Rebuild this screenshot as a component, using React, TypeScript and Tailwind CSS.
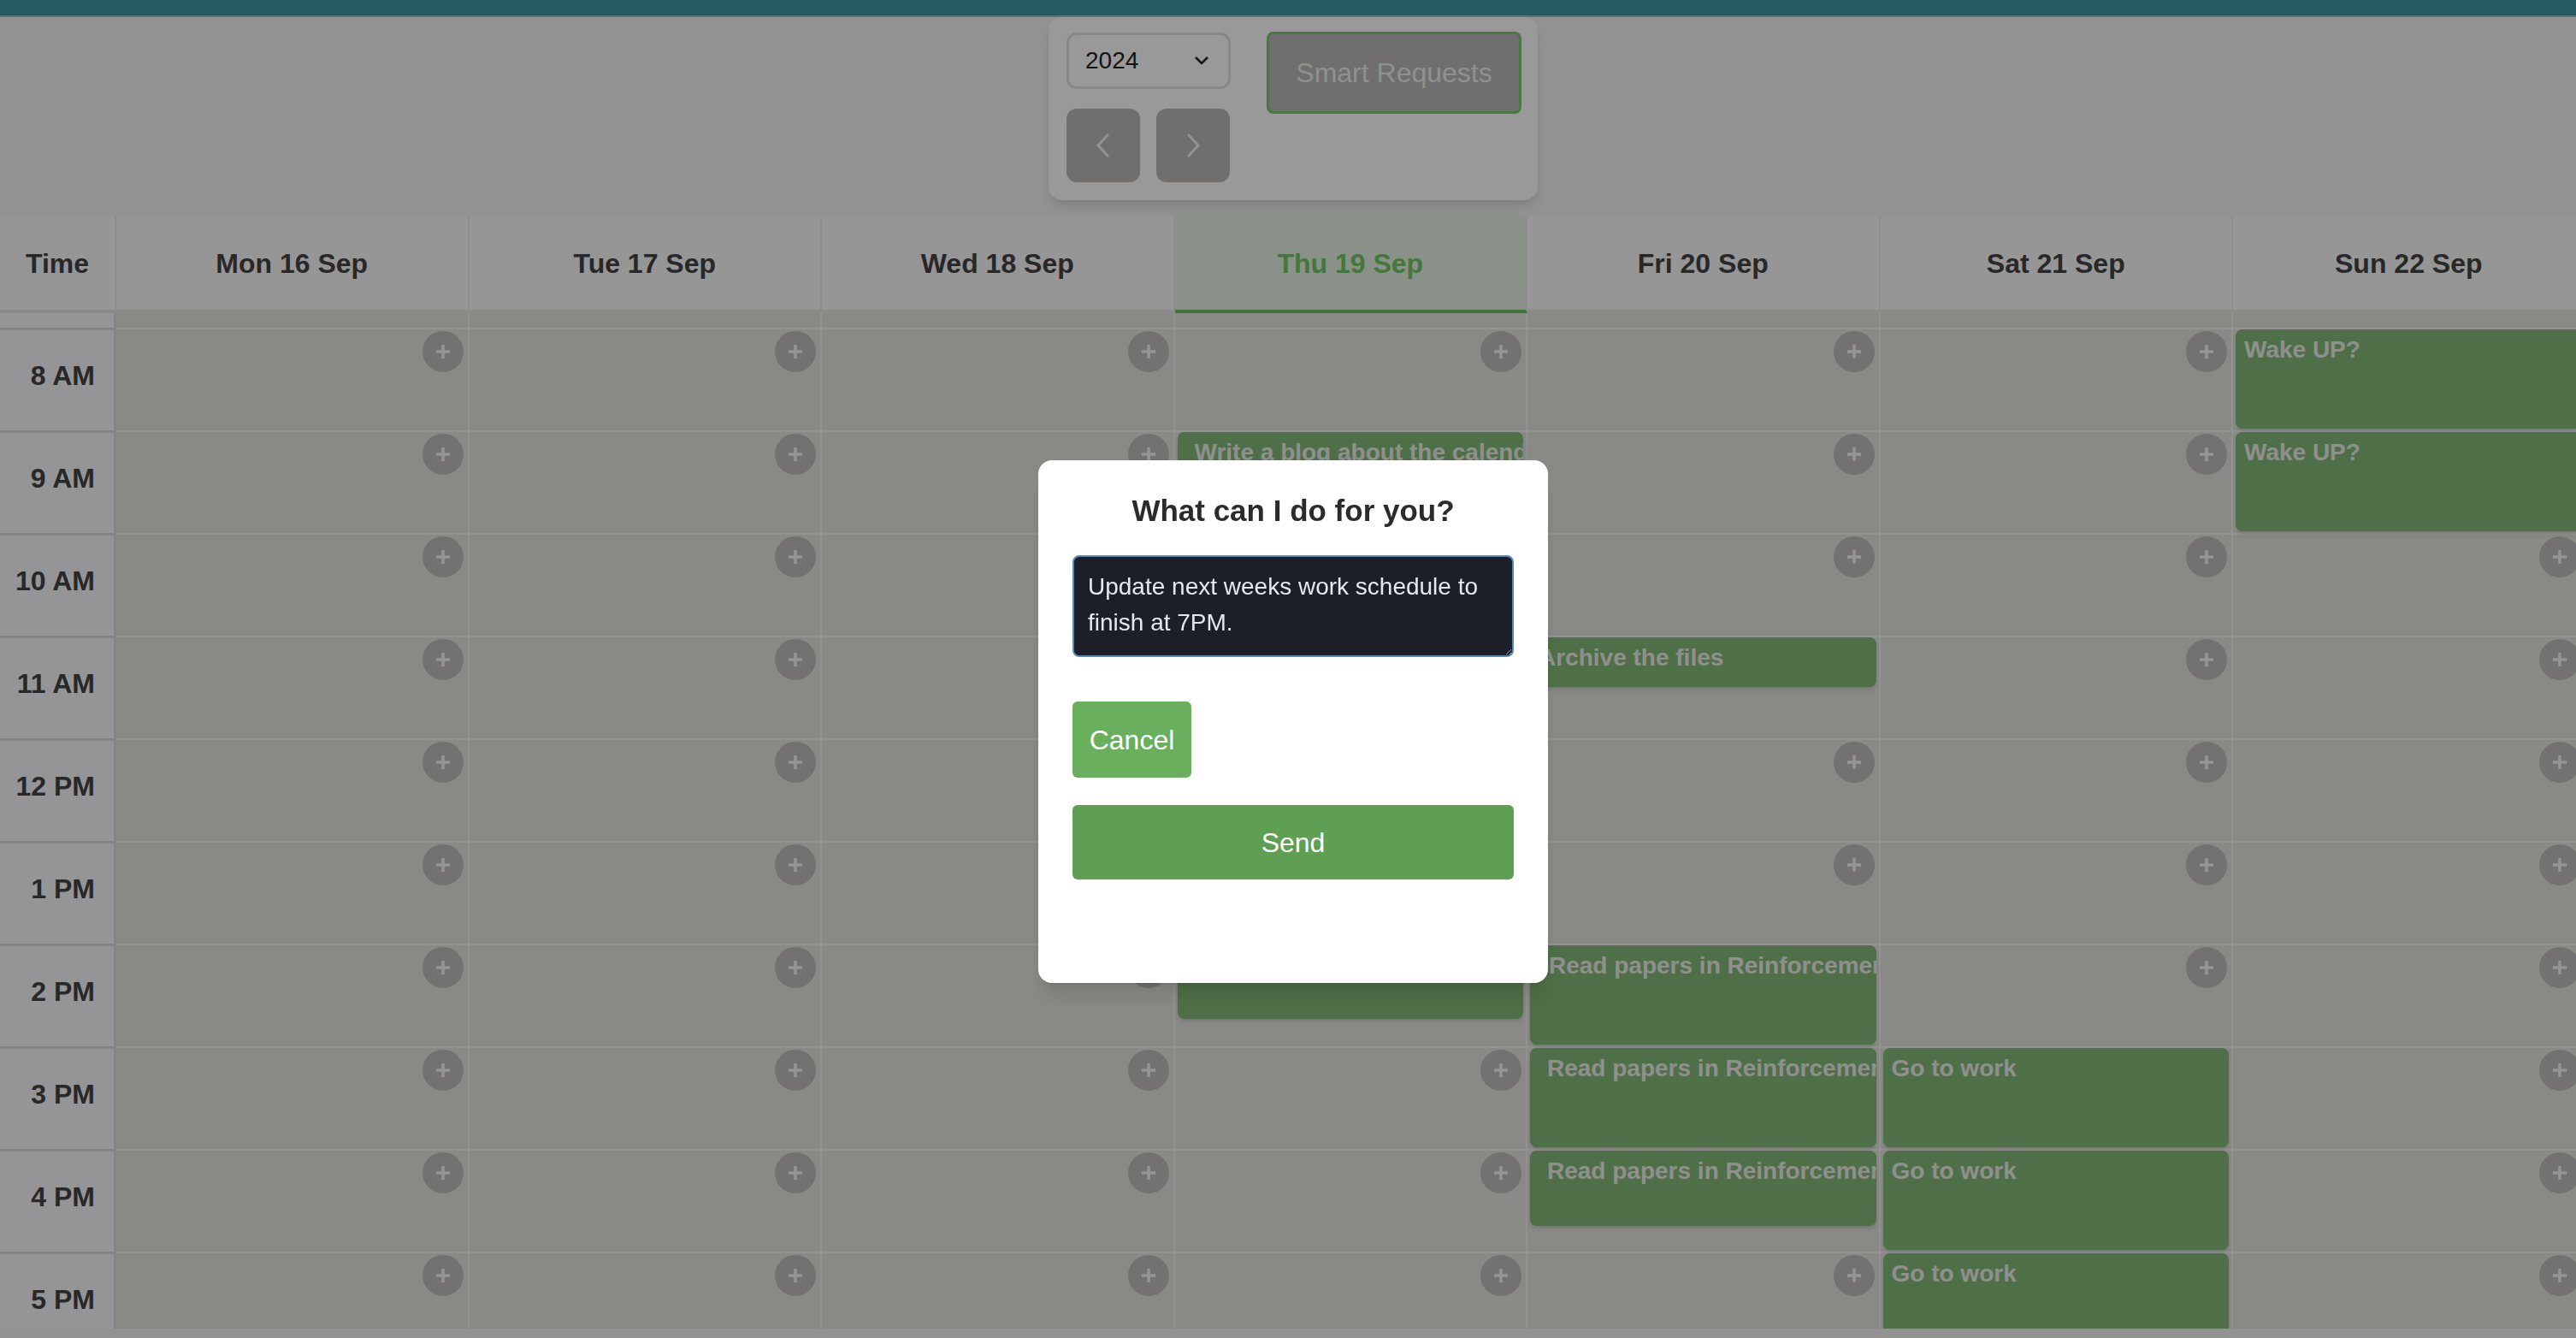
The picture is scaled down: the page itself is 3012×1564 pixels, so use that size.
import { useEffect, useRef } from 'react';

const days = ['Mon 16 Sep', 'Tue 17 Sep', 'Wed 18 Sep', 'Thu 19 Sep', 'Fri 20 Sep', 'Sat 21 Sep', 'Sun 22 Sep'];
const today = 3;

const hours = Array.from({ length: 24 }, (_, h) =>
  h === 0 ? '12 AM' : h < 12 ? `${h} AM` : h === 12 ? '12 PM' : `${h - 12} PM`
);

type CalEvent = { day: number; hour: number; title: string; height: number; pad: string };

const events: CalEvent[] = [
  { day: 3, hour: 9, title: 'Write a blog about the calendar app', height: 116, pad: 'pl-[20px]' },
  { day: 3, hour: 14, title: 'Prepare slides for the demo', height: 86, pad: 'pl-[20px]' },
  { day: 4, hour: 11, title: 'Archive the files', height: 58, pad: 'pl-[10px]' },
  { day: 4, hour: 14, title: 'Read papers in Reinforcement Learning', height: 116, pad: 'pl-[22px]' },
  { day: 4, hour: 15, title: 'Read papers in Reinforcement Learning', height: 116, pad: 'pl-[20px]' },
  { day: 4, hour: 16, title: 'Read papers in Reinforcement Learning', height: 88, pad: 'pl-[20px]' },
  { day: 5, hour: 15, title: 'Go to work', height: 116, pad: 'pl-[10px]' },
  { day: 5, hour: 16, title: 'Go to work', height: 116, pad: 'pl-[10px]' },
  { day: 5, hour: 17, title: 'Go to work', height: 116, pad: 'pl-[10px]' },
  { day: 6, hour: 8, title: 'Wake UP?', height: 116, pad: 'pl-[10px]' },
  { day: 6, hour: 9, title: 'Wake UP?', height: 116, pad: 'pl-[10px]' },
];

function PlusButton() {
  return (
    <button className="flex h-[48px] w-[48px] items-center justify-center rounded-full bg-[#c0bcbc]">
      <svg width="20" height="20" viewBox="0 0 20 20">
        <path d="M10 2v16M2 10h16" stroke="#f6fbf6" strokeWidth="3.5" />
      </svg>
    </button>
  );
}

function Toolbar() {
  return (
    <div className="mx-auto flex w-[572px] gap-[42px] rounded-2xl bg-white pl-[21px] pr-[19px] pt-[17px] pb-[21px] shadow-lg">
      <div className="flex flex-col gap-[23px]">
        <div className="mt-[1px] flex h-[66px] w-[192px] items-center justify-between rounded-xl border-[3px] border-[#e2e2e2] bg-white pl-[19px] pr-[22px]">
          <span className="text-[28px] text-[#222]">2024</span>
          <svg width="18" height="12" viewBox="0 0 18 12">
            <path d="M2 2l7 7 7-7" stroke="#222" strokeWidth="2.5" fill="none" />
          </svg>
        </div>
        <div className="flex gap-[19px]">
          <button className="flex h-[86px] w-[86px] items-center justify-center rounded-xl bg-[#bcb8b8]">
            <svg width="20" height="32" viewBox="0 0 20 32">
              <path d="M16 3L4 16l12 13" stroke="#f4f4f4" strokeWidth="3" fill="none" />
            </svg>
          </button>
          <button className="flex h-[86px] w-[86px] items-center justify-center rounded-xl bg-[#bcb8b8]">
            <svg width="20" height="32" viewBox="0 0 20 32">
              <path d="M4 3l12 13L4 29" stroke="#f4f4f4" strokeWidth="3" fill="none" />
            </svg>
          </button>
        </div>
      </div>
      <button className="h-[96px] w-[298px] rounded-lg border-[3px] border-[#7bc972] bg-[#bbb7b7] text-[32px] text-[#edf4ed]">
        Smart Requests
      </button>
    </div>
  );
}

function Calendar() {
  const bodyRef = useRef<HTMLDivElement>(null);

  useEffect(() => {
    // scroll to the start of the working day
    if (bodyRef.current) bodyRef.current.scrollTop = 943;
  }, []);

  return (
    <div className="mt-[19px] flex h-[1300px] flex-col">
      <div className="grid grid-cols-[136px_repeat(7,412.5px)]">
        <div className="flex h-[113px] items-center justify-center border-b-4 border-r-2 border-b-[#e6e6e4] border-r-[#ececec] bg-[#fafafc] text-[32px] font-bold text-[#444]">
          Time
        </div>
        {days.map((d, i) =>
          i === today ? (
            <div
              key={d}
              className="flex h-[113px] items-center justify-center border-b-4 border-r-2 border-b-[#6cc062] border-r-[#ececec] bg-[#e6f2e4] text-[32px] font-bold text-[#70c664]"
            >
              {d}
            </div>
          ) : (
            <div
              key={d}
              className="flex h-[113px] items-center justify-center border-b-4 border-r-2 border-b-[#e6e6e4] border-r-[#ececec] bg-[#fafafc] text-[32px] font-bold text-[#444]"
            >
              {d}
            </div>
          )
        )}
      </div>
      <div ref={bodyRef} className="flex-1 overflow-hidden">
        {hours.map((label, h) => (
          <div key={label} className="grid h-[120px] grid-cols-[136px_repeat(7,412.5px)]">
            <div className="flex items-center justify-end border-t-[3px] border-r-[3px] border-t-[#dcdcdc] border-r-[#dedede] bg-[#f8f8fc] pb-[12px] pr-[22px] text-[32px] font-bold text-[#444]">
              {label}
            </div>
            {days.map((d, di) => {
              const ev = events.find((e) => e.day === di && e.hour === h);
              return (
                <div
                  key={d}
                  className="relative flex items-start justify-end border-t-2 border-r-2 border-[#f3f3f1] bg-[#e4e5df] pr-[5px] pt-[2px]"
                >
                  <PlusButton />
                  {ev && (
                    <div
                      className={`absolute left-[3px] right-[3px] top-0 z-10 overflow-hidden whitespace-nowrap rounded-lg bg-[#84b978] pt-[8px] text-[28px] font-bold leading-[32px] text-[#eef0ec] shadow-md ${ev.pad}`}
                      style={{ height: ev.height }}
                    >
                      {ev.title}
                    </div>
                  )}
                </div>
              );
            })}
          </div>
        ))}
      </div>
    </div>
  );
}

function RequestModal() {
  return (
    <div className="fixed inset-0 z-50 flex items-start justify-center pl-[12px] pt-[538px]">
      <div className="flex h-[611px] w-[596px] flex-col rounded-2xl bg-white px-[40px] pt-[38px] shadow-xl">
        <h2 className="text-center text-[35px] font-bold leading-[42px] text-[#2b2b2b]">What can I do for you?</h2>
        <textarea
          className="mt-[31px] h-[119px] w-full rounded-lg border-2 border-[#5a87b8] bg-[#1c1f27] px-[16px] py-[14px] text-[28px] leading-[42px] text-[#e6e8ee] outline-none"
          defaultValue="Update next weeks work schedule to finish at 7PM."
        />
        <button className="mt-[52px] h-[89px] w-[139px] rounded-md bg-[#6aaf5e] text-[32px] text-white">Cancel</button>
        <button className="mt-[32px] h-[87px] w-full rounded-md bg-[#5e9f53] text-[32px] text-white">Send</button>
      </div>
    </div>
  );
}

export default function App() {
  return (
    <div className="relative h-screen w-screen overflow-hidden bg-[#f3f3f3] [font-family:'Liberation_Sans',Arial,sans-serif]">
      <div className="h-[20px] border-b-2 border-[#93c6cc] bg-[#3c98a3]" />
      <div className="w-[3024px]">
        <Toolbar />
        <Calendar />
      </div>
      <div className="fixed inset-0 z-40 bg-black/40" />
      <RequestModal />
    </div>
  );
}
